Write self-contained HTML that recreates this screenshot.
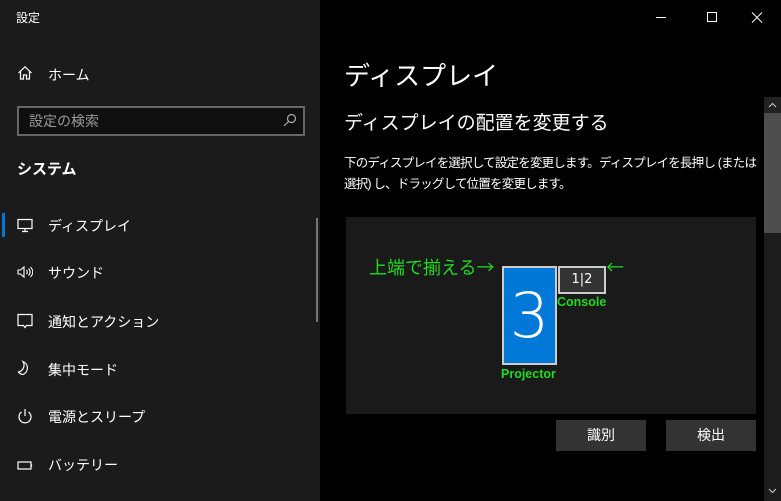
<!DOCTYPE html>
<html><head><meta charset="utf-8"><style>
*{margin:0;padding:0;box-sizing:border-box}
body{width:781px;height:501px;overflow:hidden;background:#000;font-family:"Liberation Sans","Noto Sans CJK JP",sans-serif;color:#fff;position:relative}
.left{position:absolute;left:0;top:0;width:320px;height:501px;background:#1b1b1b}
.a{position:absolute}
.nav{position:absolute;left:48px;font-size:14px;color:#fff}
.ic{position:absolute;left:17px}
.g{color:#1edc1e}
</style></head><body>
<div class="left">
<div class="a" style="left:16px;top:9px;font-size:12px">設定</div>
<svg class="ic" style="top:65px" width="16" height="16" viewBox="0 0 16 16" fill="none" stroke="#fff" stroke-width="1.2"><path d="M1.5 8 8 1.8 14.5 8M3.5 6.5V14h3V10h3v4h3V6.5"/></svg>
<div class="nav" style="top:65px">ホーム</div>
<div class="a" style="left:17px;top:106px;width:288px;height:30px;border:2px solid #666;background:#0f0f0f"></div>
<div class="a" style="left:29px;top:111px;font-size:14px;color:#999">設定の検索</div>
<svg class="a" style="left:283px;top:113px" width="14" height="14" viewBox="0 0 14 14" fill="none" stroke="#aaa" stroke-width="1.2"><circle cx="8.5" cy="5.5" r="4"/><path d="M5.5 8.5 1 13"/></svg>
<div class="a" style="left:17px;top:158px;font-size:15px;font-weight:bold">システム</div>
<div class="a" style="left:2px;top:213px;width:3px;height:24px;background:#0078d7"></div>
<svg class="ic" style="top:217px" width="16" height="16" viewBox="0 0 16 16" fill="none" stroke="#fff" stroke-width="1.2"><rect x="1" y="2.5" width="14" height="9"/><path d="M8 11.5v3M5 14.5h6"/></svg>
<div class="nav" style="top:216px">ディスプレイ</div>
<svg class="ic" style="top:264px" width="16" height="16" viewBox="0 0 16 16" fill="none" stroke="#fff" stroke-width="1.1"><path d="M1 6h2.5L7 3v10L3.5 10H1z M9.5 6c1 1 1 3 0 4M11.5 4.5c2 2 2 5 0 7M13.5 3c3 3 3 7 0 10"/></svg>
<div class="nav" style="top:263px">サウンド</div>
<svg class="ic" style="top:313px" width="16" height="16" viewBox="0 0 16 16" fill="none" stroke="#fff" stroke-width="1.2"><path d="M1 1.5h14v11H9.5L8 14.5 6.5 12.5H1z"/></svg>
<div class="nav" style="top:312px">通知とアクション</div>
<svg class="ic" style="top:360px" width="16" height="16" viewBox="0 0 16 16" fill="none" stroke="#fff" stroke-width="1.2"><path d="M6 1.5A7 7 0 0 1 6 14.5 6 6 0 0 1 1.5 12 7 7 0 0 0 6 1.5z"/></svg>
<div class="nav" style="top:360px">集中モード</div>
<svg class="ic" style="top:408px" width="16" height="16" viewBox="0 0 16 16" fill="none" stroke="#fff" stroke-width="1.2"><path d="M4.5 4a6 6 0 1 0 7 0M8 1v7"/></svg>
<div class="nav" style="top:407px">電源とスリープ</div>
<svg class="ic" style="top:458px" width="16" height="16" viewBox="0 0 16 16" fill="none" stroke="#fff" stroke-width="1.2"><rect x="1" y="4" width="13" height="7"/><path d="M14.5 6.5v2"/></svg>
<div class="nav" style="top:455px">バッテリー</div>
<div class="a" style="left:316px;top:218px;width:2px;height:104px;background:#777"></div>
</div>
<svg class="a" style="left:656px;top:12px" width="110" height="12" viewBox="0 0 110 12" fill="none" stroke="#fff" stroke-width="1"><path d="M0 5.5h10M51.5 0.5h9v9h-9zM96 0.5l10 10M106 0.5l-10 10"/></svg>
<div class="a" style="left:344px;top:56px;font-size:26px">ディスプレイ</div>
<div class="a" style="left:344px;top:108px;font-size:19px">ディスプレイの配置を変更する</div>
<div class="a" style="left:344px;top:153px;font-size:12.5px;line-height:21px;white-space:nowrap;letter-spacing:-0.8px">下のディスプレイを選択して設定を変更します。ディスプレイを長押し (または<br>選択) し、ドラッグして位置を変更します。</div>
<div class="a" style="left:346px;top:217px;width:410px;height:197px;background:#1a1a1a"></div>
<div class="a g" style="left:369px;top:255px;font-size:18px;white-space:nowrap;font-family:'Noto Sans CJK JP',sans-serif;line-height:24px">上端で揃える→</div>
<div class="a g" style="left:606px;top:255px;font-size:18px;font-family:'Noto Sans CJK JP',sans-serif;line-height:24px">←</div>
<div class="a" style="left:502px;top:266px;width:55px;height:99px;background:#0078d7;border:2px solid #ccc;text-align:center;font-size:62px;line-height:95px;color:#fff;font-family:'DejaVu Sans ExtraLight','DejaVu Sans',sans-serif;font-weight:200">3</div>
<div class="a" style="left:558px;top:266px;width:48px;height:28px;background:#333;border:2px solid #ccc;text-align:center;font-size:13px;line-height:24px;font-family:'DejaVu Sans ExtraLight','DejaVu Sans',sans-serif">1|2</div>
<div class="a g" style="left:557px;top:295px;font-size:12.5px;font-weight:bold">Console</div>
<div class="a g" style="left:501px;top:367px;font-size:12.5px;font-weight:bold">Projector</div>
<div class="a" style="left:556px;top:420px;width:90px;height:31px;background:#333;text-align:center;line-height:31px;font-size:14px">識別</div>
<div class="a" style="left:666px;top:420px;width:90px;height:31px;background:#333;text-align:center;line-height:31px;font-size:14px">検出</div>
<div class="a" style="left:764px;top:97px;width:17px;height:404px;background:#1c1c1c"></div>
<svg class="a" style="left:764px;top:97px" width="17" height="16"><rect width="17" height="16" fill="#222"/><path d="M5 10 8.5 6.5 12 10" fill="none" stroke="#ccc"/></svg>
<div class="a" style="left:764px;top:113px;width:17px;height:120px;background:#4d4d4d"></div>
<svg class="a" style="left:764px;top:484px" width="17" height="14"><path d="M5 5 8.5 8.5 12 5" fill="none" stroke="#ccc"/></svg>
</body></html>
